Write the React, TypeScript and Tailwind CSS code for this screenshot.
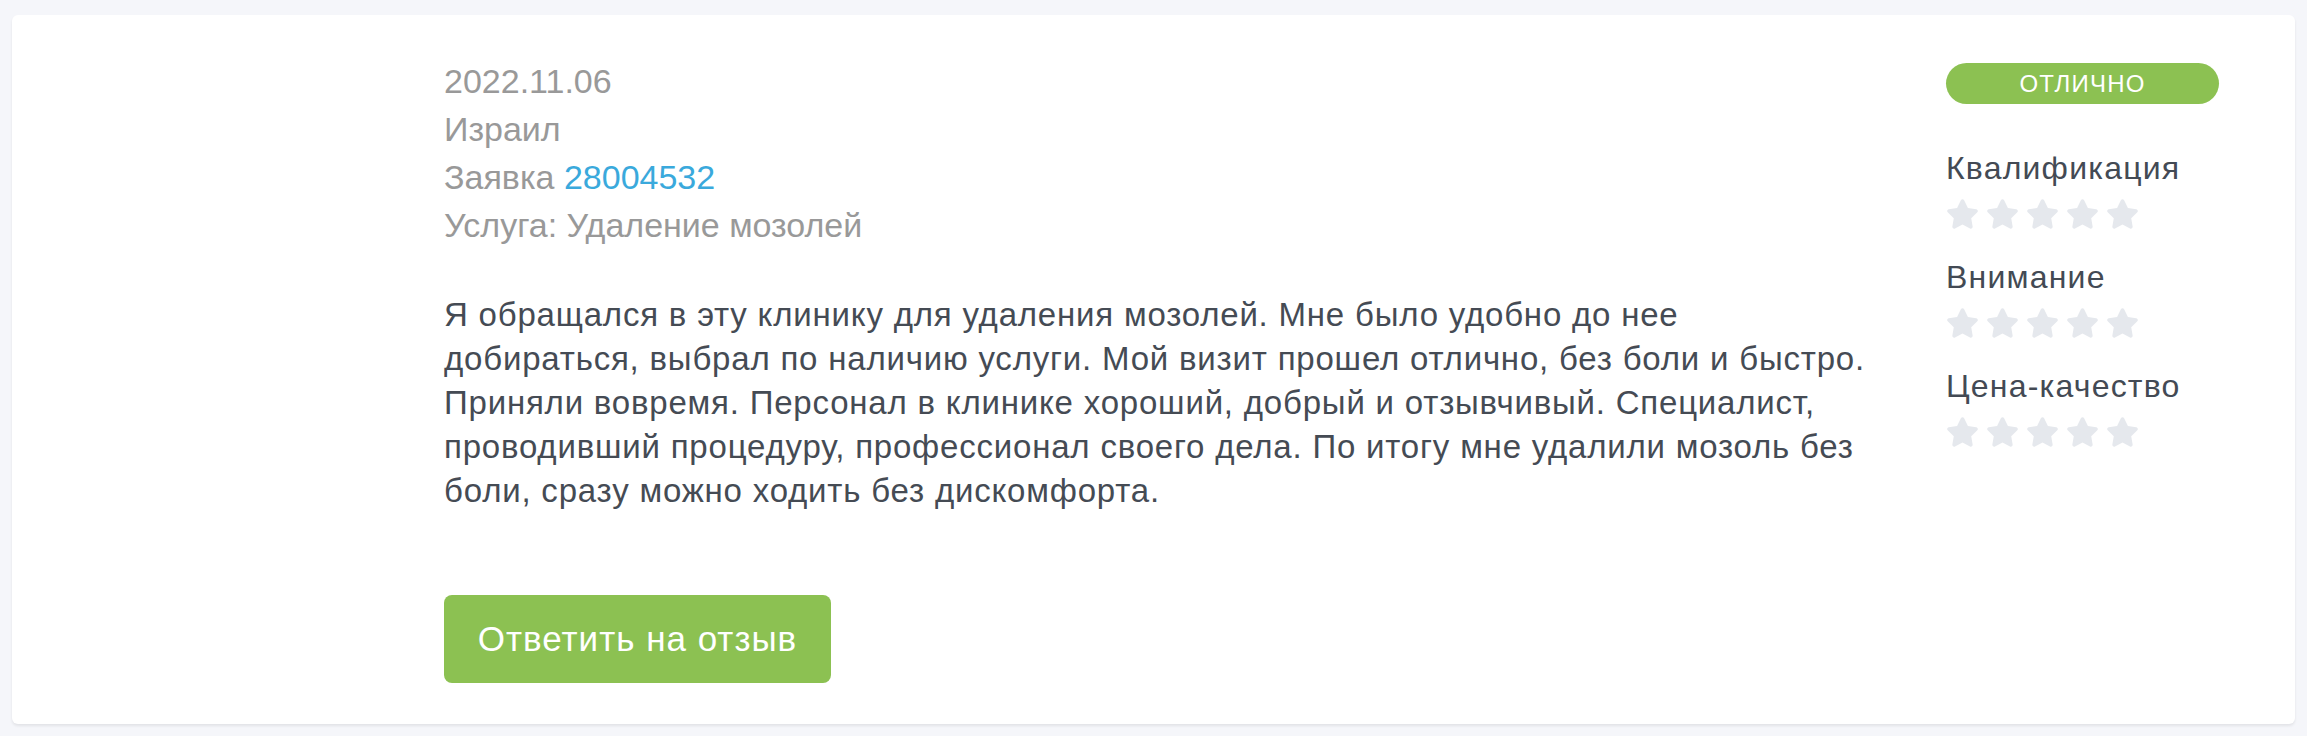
import React from 'react';

const ratings = ['Квалификация', 'Внимание', 'Цена-качество'];

const reviewLines = [
  'Я обращался в эту клинику для удаления мозолей. Мне было удобно до нее',
  'добираться, выбрал по наличию услуги. Мой визит прошел отлично, без боли и быстро.',
  'Приняли вовремя. Персонал в клинике хороший, добрый и отзывчивый. Специалист,',
  'проводивший процедуру, профессионал своего дела. По итогу мне удалили мозоль без',
  'боли, сразу можно ходить без дискомфорта.',
];

const Star = () => (
  <svg viewBox="0 0 576 512" className="w-[33px] h-[30px]" fill="#e5e8ed">
    <path d="M259.3 17.8L194 150.2 47.9 171.5c-26.2 3.8-36.7 36.1-17.7 54.6l105.7 103-25 145.5c-4.5 26.3 23.2 46 46.4 33.7L288 439.6l130.7 68.7c23.2 12.2 50.9-7.4 46.4-33.7l-25-145.5 105.7-103c19-18.5 8.5-50.8-17.7-54.6L382 150.2 316.7 17.8c-11.7-23.6-45.6-23.9-57.4 0z" />
  </svg>
);

const App = () => {
  return (
    <div
      className="min-h-screen bg-[#f5f6fa] px-[12px] pt-[15px]"
      style={{ fontFamily: '"Liberation Sans", Arial, sans-serif' }}
    >
      <div className="flex bg-white rounded-md shadow-[0_2px_3px_rgba(0,0,0,0.08)] pl-[432px] pr-[76px] pt-[42px] pb-[41px]">
        <div className="w-[1415px]">
          <div className="text-[34px] leading-[48px] text-[#999999]">
            <p>2022.11.06</p>
            <p>Израил</p>
            <p>
              Заявка <a className="text-[#3aa9dc]">28004532</a>
            </p>
            <p>Услуга: Удаление мозолей</p>
          </div>

          <p className="mt-[44px] text-[33px] leading-[44px] tracking-[0.8px] text-[#454b54] whitespace-nowrap">
            {reviewLines.map((line, i) => (
              <React.Fragment key={i}>
                {line}
                {i < reviewLines.length - 1 && <br />}
              </React.Fragment>
            ))}
          </p>

          <button className="mt-[82px] w-[387px] h-[88px] rounded-lg bg-[#8cc152] text-white text-[35px] tracking-[1px]">
            Ответить на отзыв
          </button>
        </div>

        <div className="ml-auto w-[273px] pt-[6px]">
          <div className="h-[41px] rounded-full bg-[#8cc152] text-white text-[24px] tracking-[1.2px] flex items-center justify-center">
            ОТЛИЧНО
          </div>
          <div className="mt-[44px] flex flex-col gap-[28px]">
            {ratings.map((label) => (
              <div key={label}>
                <p className="text-[32px] leading-[40px] tracking-[1.2px] text-[#434a54]">{label}</p>
                <div className="mt-[11px] flex gap-[7px]">
                  {[0, 1, 2, 3, 4].map((i) => (
                    <Star key={i} />
                  ))}
                </div>
              </div>
            ))}
          </div>
        </div>
      </div>
    </div>
  );
};

export default App;
